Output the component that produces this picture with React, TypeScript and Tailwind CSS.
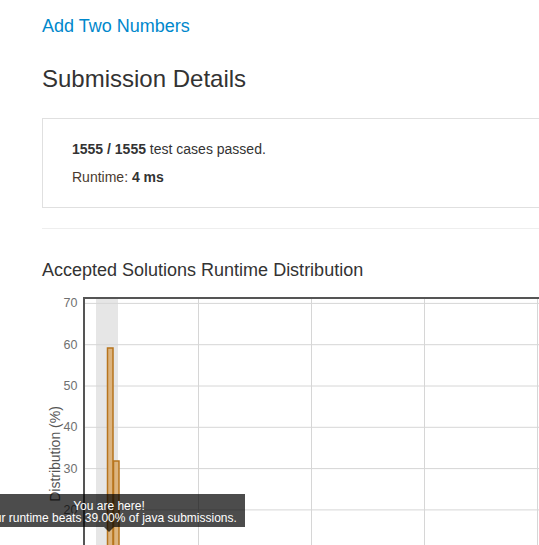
import React from 'react';

const yTicks = [70, 60, 50, 40, 30, 20, 10];
const vGrid = [198, 311, 424, 537];

// chart coords: page x - 42, page y - 285
const X0 = 42;
const Y0 = 285;
const yOf = (v: number) => 592 - v * 4.13 - Y0;

function RuntimeChart() {
  return (
    <svg width={497} height={260} className="block mt-[4px]" style={{ fontFamily: '"Liberation Sans", Arial, sans-serif' }}>
      {/* highlight band for your runtime */}
      <rect x={96 - X0} y={299 - Y0} width={22} height={260} fill="#e6e6e6" />
      {/* horizontal grid */}
      {yTicks.map((v) => (
        <g key={v}>
          <line x1={85 - X0} x2={497} y1={yOf(v) + 0.5} y2={yOf(v) + 0.5} stroke="#d6d6d6" strokeWidth={1} />
          <text x={77.5 - X0} y={yOf(v) + 4.5} textAnchor="end" fontSize={12.5} fill="#707070">
            {v}
          </text>
        </g>
      ))}
      {/* vertical grid */}
      {vGrid.map((x) => (
        <line key={x} x1={x - X0 + 0.5} x2={x - X0 + 0.5} y1={299 - Y0} y2={260} stroke="#d6d6d6" strokeWidth={1} />
      ))}
      {/* bars */}
      <rect x={107.5 - X0} y={348 - Y0} width={5.5} height={260} fill="#dcb47f" stroke="#b7741d" strokeWidth={1.5} />
      <rect x={113.5 - X0} y={461 - Y0} width={5.5} height={260} fill="#dcb47f" stroke="#b7741d" strokeWidth={1.5} />
      {/* frame */}
      <line x1={83 - X0} x2={497} y1={298 - Y0} y2={298 - Y0} stroke="#555" strokeWidth={2} />
      <line x1={84 - X0} x2={84 - X0} y1={297 - Y0} y2={260} stroke="#555" strokeWidth={2} />
      {/* axis label */}
      <text
        x={0}
        y={0}
        transform={`translate(${60 - X0}, ${454 - Y0}) rotate(-90)`}
        textAnchor="middle"
        fontSize={14}
        fill="#555"
      >
        Distribution (%)
      </text>
    </svg>
  );
}

export default function App() {
  return (
    <div
      className="relative w-[539px] h-[545px] overflow-hidden bg-white text-[#333]"
      style={{ fontFamily: '"Liberation Sans", Arial, sans-serif' }}
    >
      <div className="w-[900px] pl-[42px]">
        <div className="pt-[16px] text-[18px] leading-[20px] text-[#0088cc]">Add Two Numbers</div>

        <h1 className="mt-[30px] text-[24px] leading-[26px] text-[#333]">Submission Details</h1>

        {/* result card */}
        <div className="mt-[26px] h-[90px] border border-[#e0e0e0] pl-[29px] pt-[20px] text-[14px] leading-[20px]">
          <div>
            <span className="font-bold">1555 / 1555</span> test cases passed.
          </div>
          <div className="mt-[8px]">
            <span className="text-[#4a3a2e]">Runtime:</span> <span className="font-bold">4 ms</span>
          </div>
        </div>

        <div className="mt-[20px] border-t border-[#eeeeee]" />

        <h3 className="mt-[30px] text-[18px] leading-[22px] text-[#333]">Accepted Solutions Runtime Distribution</h3>

        <RuntimeChart />
      </div>

      {/* tooltip */}
      <div className="absolute left-[-27px] top-[494px] w-[272px]">
        <div className="bg-black/70 pt-[6px] pb-[3px] text-center text-[12px] leading-[12px] text-white">
          <div>You are here!</div>
          <div>Your runtime beats 39.00% of java submissions.</div>
        </div>
        <div className="mx-auto w-0 h-0 border-x-[5px] border-x-transparent border-t-[5px] border-t-black/70" />
      </div>
    </div>
  );
}
